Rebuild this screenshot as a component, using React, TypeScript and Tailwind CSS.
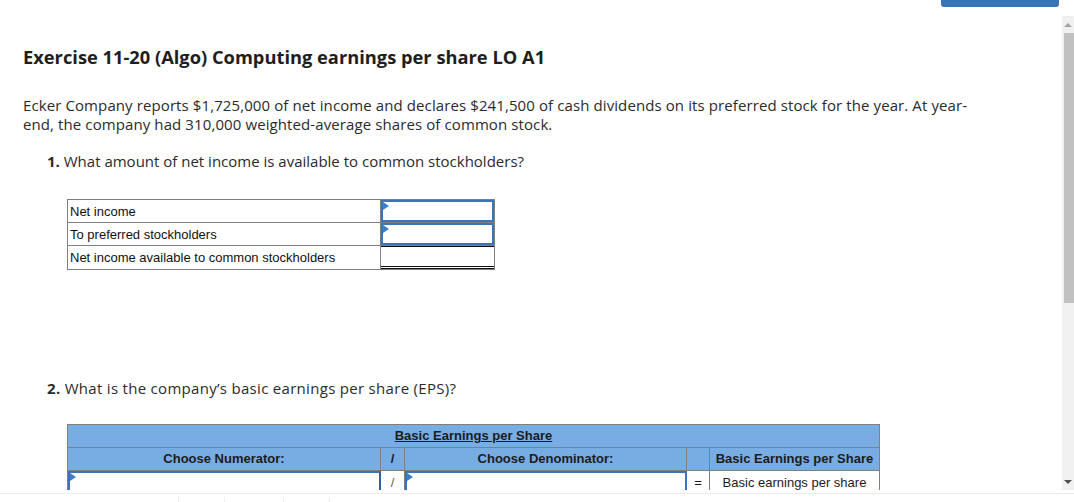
import React from 'react';

/* ++++++++++ SMALL PIECES ++++++++++ */
const Marker: React.FC = () => (
  <span className="absolute left-0 top-0 w-0 h-0 border-y-[4px] border-y-transparent border-l-[6px] border-l-[#3d7cc9]" />
);

const InputCell: React.FC<{ className?: string }> = ({ className = '' }) => (
  <div className={`relative h-full border-2 border-[#3b74ba] ${className}`}>
    <Marker />
  </div>
);

const Table1Row: React.FC<{ label: string; last?: boolean; children: React.ReactNode }> = ({ label, last, children }) => (
  <div className={`flex h-[23px] ${last ? '' : 'border-b border-[#7f7f7f]'}`}>
    <div className="w-[313px] border-r border-[#7f7f7f] pl-[2px] pt-[1px] flex items-center text-[13px] text-[#111]">{label}</div>
    <div className="flex-1">{children}</div>
  </div>
);

const App: React.FC = () => {
  return (
    <div className="w-[1074px] h-[502px] overflow-hidden bg-white flex flex-col" style={{ fontFamily: '"Open Sans", Lato, sans-serif' }}>
      {/* top strip with the blue tab */}
      <div className="h-[16px] flex justify-end pr-[15px] shrink-0">
        <div className="w-[118px] h-[7px] bg-[#3a73b8] rounded-b-[3px]" />
      </div>

      <div className="flex h-[474px] shrink-0">
        <main className="flex-1 overflow-hidden pl-[23px] pt-[30px] text-[#2b2b2b]">
          <h1 className="text-[18.3px] leading-[22px] font-bold text-[#1e1e1e]">
            Exercise 11-20 (Algo) Computing earnings per share LO A1
          </h1>

          <p className="mt-[28px] w-[955px] text-[15px] leading-[19px] tracking-[0.1px]">
            Ecker Company reports $1,725,000 of net income and declares $241,500 of cash dividends on its preferred stock for the year. At year-end, the company had 310,000 weighted-average shares of common stock.
          </p>

          <p className="mt-[18px] pl-[24px] text-[15px] leading-[19px]">
            <span className="font-bold">1.</span> What amount of net income is available to common stockholders?
          </p>

          {/* ++++++++++ TABLE 1 ++++++++++ */}
          <div className="mt-[28px] ml-[44px] w-[428px] border border-[#7f7f7f]" style={{ fontFamily: '"Liberation Sans", Arial, sans-serif' }}>
            <Table1Row label="Net income">
              <InputCell />
            </Table1Row>
            <Table1Row label="To preferred stockholders">
              <InputCell />
            </Table1Row>
            <Table1Row label="Net income available to common stockholders" last>
              <div className="h-full border-t border-[#111] border-b-[3px] border-b-[#111] border-double" />
            </Table1Row>
          </div>

          <p className="mt-[109px] pl-[24px] text-[15px] leading-[19px] tracking-[0.3px]">
            <span className="font-bold">2.</span> What is the company’s basic earnings per share (EPS)?
          </p>

          {/* ++++++++++ TABLE 2 ++++++++++ */}
          <div className="mt-[26px] ml-[44px] w-[813px] border border-[#7f7f7f] text-[13px] text-[#1c1c1c]" style={{ fontFamily: '"Liberation Sans", Arial, sans-serif' }}>
            <div className="h-[23px] bg-[#78ade3] border-b border-[#7f7f7f] flex items-center justify-center font-bold underline">
              Basic Earnings per Share
            </div>
            <div className="flex h-[23px] bg-[#78ade3] border-b border-[#7f7f7f] font-bold">
              <div className="w-[313px] border-r border-[#7f7f7f] flex items-center justify-center">Choose Numerator:</div>
              <div className="w-[24px] border-r border-[#7f7f7f] flex items-center justify-center">/</div>
              <div className="w-[282px] border-r border-[#7f7f7f] flex items-center justify-center">Choose Denominator:</div>
              <div className="w-[23px] border-r border-[#7f7f7f]" />
              <div className="flex-1 flex items-center justify-center">Basic Earnings per Share</div>
            </div>
            <div className="flex h-[23px]">
              <div className="w-[313px]"><InputCell className="border-r-[#2f5f9c]" /></div>
              <div className="w-[24px] border-r border-[#7f7f7f] flex items-center justify-center text-[#6b5a4a]">/</div>
              <div className="w-[282px]"><InputCell /></div>
              <div className="w-[23px] border-r border-[#7f7f7f] flex items-center justify-center">=</div>
              <div className="flex-1 flex items-center justify-center">Basic earnings per share</div>
            </div>
          </div>
        </main>

        {/* ++++++++++ SCROLLBAR ++++++++++ */}
        <div className="w-[12px] bg-[#f0f0f0] flex flex-col items-end">
          <div className="h-[17px] w-full flex items-center justify-center">
            <span className="w-0 h-0 border-x-[4px] border-x-transparent border-b-[4px] border-b-[#a3a3a3]" />
          </div>
          <div className="w-[10px] h-[270px] bg-[#c1c1c1]" />
          <div className="flex-1" />
          <div className="h-[17px] w-full flex items-center justify-center">
            <span className="w-0 h-0 border-x-[4px] border-x-transparent border-t-[4px] border-t-[#505050]" />
          </div>
        </div>
      </div>

      {/* ++++++++++ FOOTER ++++++++++ */}
      <div className="mt-[3px] flex-1 border-t border-[#ececec] flex pl-[178px]">
        <div className="mt-[3px] w-[46px] border-l border-[#ececec]" />
        <div className="mt-[3px] w-[59px] border-l border-[#ececec]" />
        <div className="mt-[3px] w-[46px] border-l border-[#ececec]" />
        <div className="mt-[3px] border-l border-[#ececec]" />
      </div>
    </div>
  );
};

export default App;
